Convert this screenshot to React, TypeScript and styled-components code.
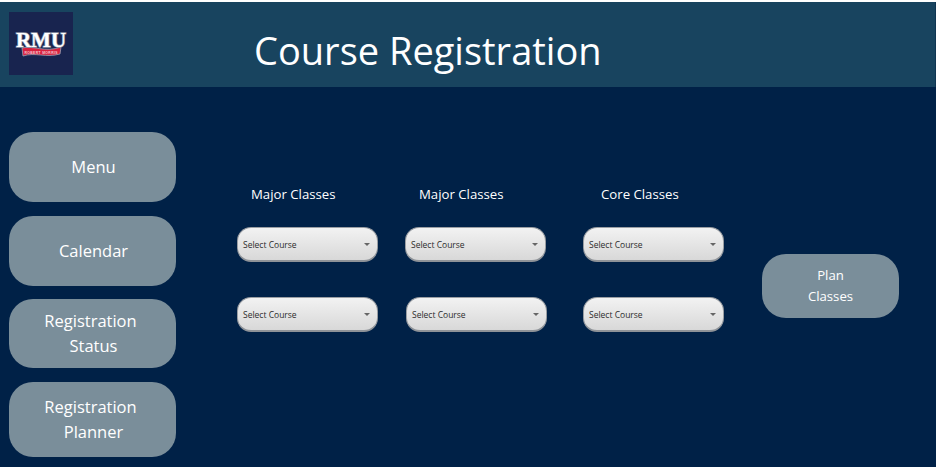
import React from "react";
import styled, { createGlobalStyle } from "styled-components";

const Global = createGlobalStyle`
  html, body { margin: 0; padding: 0; background: #fff; }
  body { font-family: "Open Sans", "Noto Sans", "Liberation Sans", sans-serif; }
  * { box-sizing: border-box; }
`;

const Page = styled.div`
  width: 936px;
  height: 467px;
  padding-top: 2px;
  background: #fff;
  display: flex;
  flex-direction: column;
`;

const Header = styled.header`
  height: 85px;
  background: #18445f;
  border-right: 1px solid #0f3552;
  display: flex;
  padding: 10px 0 0 9px;
`;

const LogoBox = styled.div`
  width: 64px;
  height: 63px;
  background: #18244f;
  display: flex;
  align-items: center;
  justify-content: center;
`;

const Title = styled.h1`
  margin: 0 0 0 181px;
  height: 75px;
  line-height: 76px;
  font-size: 38px;
  font-weight: 400;
  color: #fff;
`;

const Body = styled.div`
  flex: 1;
  background: #002147;
  display: flex;
`;

const Sidebar = styled.nav`
  width: 228px;
  padding: 45px 0 0 9px;
  display: flex;
  flex-direction: column;
`;

const NavButton = styled.button<{ $h: number; $mb: number }>`
  width: 167px;
  height: ${(p) => p.$h}px;
  margin-bottom: ${(p) => p.$mb}px;
  flex: none;
  border: none;
  border-radius: 24px;
  background: #7a8e9a;
  color: #fff;
  font: 400 16.5px/25px "Open Sans", sans-serif;
  padding: 0 0 2px 2px;
`;

const WideLine = styled.span`
  display: inline-block;
  padding-right: 6px;
`;

const Columns = styled.div`
  padding: 97px 0 0 9px;
  display: flex;
`;

const Column = styled.section<{ $w: number }>`
  width: ${(p) => p.$w}px;
  display: flex;
  flex-direction: column;
`;

const Label = styled.div<{ $x: number }>`
  height: 20px;
  margin: 0 0 23px ${(p) => p.$x}px;
  font-size: 13.2px;
  line-height: 20px;
  color: #fff;
`;

const Select = styled.div<{ $x?: number }>`
  width: 141px;
  height: 35px;
  margin: 0 0 35px ${(p) => p.$x ?? 0}px;
  padding: 0 7px 0 5px;
  border-radius: 14px;
  border: 1px solid #9a9ea3;
  border-bottom: 2px solid #8f9398;
  background: linear-gradient(#f2f2f2, #d8d8d8);
  display: flex;
  align-items: center;
  justify-content: space-between;
  font-size: 8.5px;
  color: #2c2c2c;
`;

const Caret = styled.span`
  width: 0;
  height: 0;
  border-left: 3px solid transparent;
  border-right: 3px solid transparent;
  border-top: 3px solid #666;
`;

const PlanButton = styled.button`
  width: 137px;
  height: 64px;
  margin: 70px 0 0 0;
  flex: none;
  border: none;
  border-radius: 24px;
  background: #7a8e9a;
  color: #fff;
  font: 400 13.2px/21px "Open Sans", sans-serif;
  padding: 0;
`;

const Logo = () => (
  <svg width="64" height="63" viewBox="0 0 64 63" role="img" aria-label="RMU">
    <path d="M13 36 C24 33 36 41 52 35 L51 42 C37 46 26 40 14 44 Z" fill="#d8213f" stroke="#9aa1b2" strokeWidth="0.8" />
    <text
      x="32"
      y="34.5"
      textAnchor="middle"
      fontFamily="Liberation Serif, serif"
      fontWeight="700"
      fontSize="20"
      fill="#fff"
      stroke="#8f96a8"
      strokeWidth="1.4"
      paintOrder="stroke"
      textLength="50"
      lengthAdjust="spacingAndGlyphs"
    >
      RMU
    </text>
    <text x="32" y="41.5" textAnchor="middle" fontFamily="Liberation Sans, sans-serif" fontWeight="700" fontSize="3.4" fill="#f3c6cf" textLength="33">ROBERT MORRIS</text>
  </svg>
);

const Dropdown = ({ x }: { x?: number }) => (
  <Select $x={x}>
    Select Course
    <Caret />
  </Select>
);

export default function App() {
  return (
    <Page>
      <Global />
      <Header>
        <LogoBox><Logo /></LogoBox>
        <Title>Course Registration</Title>
      </Header>
      <Body>
        <Sidebar>
          <NavButton $h={70} $mb={14}>Menu</NavButton>
          <NavButton $h={70} $mb={13}>Calendar</NavButton>
          <NavButton $h={69} $mb={14}><WideLine>Registration</WideLine><br />Status</NavButton>
          <NavButton $h={75} $mb={0}><WideLine>Registration</WideLine><br />Planner</NavButton>
        </Sidebar>
        <Columns>
          <Column $w={168}>
            <Label $x={14}>Major Classes</Label>
            <Dropdown />
            <Dropdown />
          </Column>
          <Column $w={178}>
            <Label $x={14}>Major Classes</Label>
            <Dropdown />
            <Dropdown x={1} />
          </Column>
          <Column $w={179}>
            <Label $x={18}>Core Classes</Label>
            <Dropdown />
            <Dropdown />
          </Column>
          <PlanButton>Plan<br />Classes</PlanButton>
        </Columns>
      </Body>
    </Page>
  );
}
